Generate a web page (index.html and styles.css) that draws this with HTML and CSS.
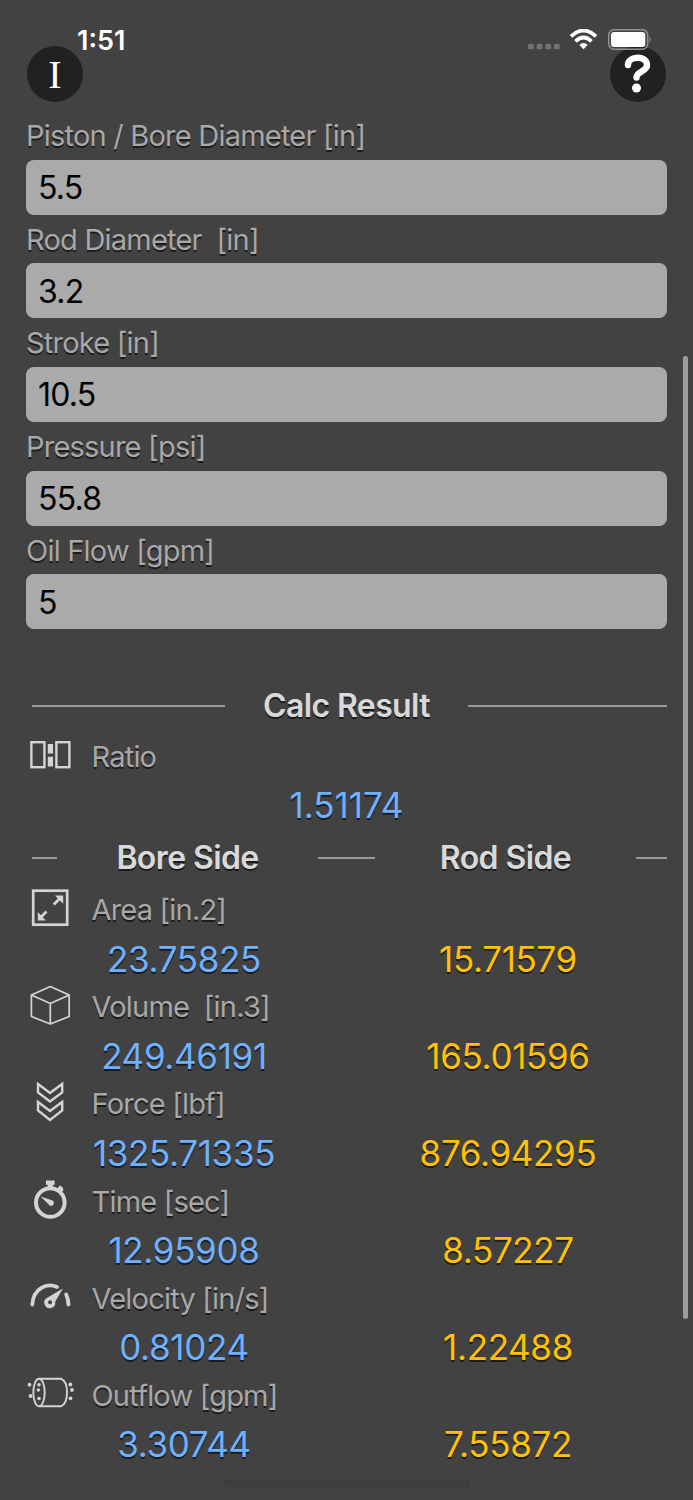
FILE: index.html
```html
<!DOCTYPE html>
<html>
<head>
<meta charset="utf-8">
<title>Cylinder Calculator</title>
<link rel="stylesheet" href="styles.css">
</head>
<body>

<div id="header">
	<div class="statusBar">
		<span class="time">1:51</span>
		<svg class="statusIcons" width="124" height="22" viewBox="0 0 124 22">
			<g fill="#727272">
				<rect x="0" y="14.800" width="5.800" height="5.500" rx="1.600"/>
				<rect x="8.700" y="14.800" width="5.800" height="5.500" rx="1.600"/>
				<rect x="17.400" y="14.800" width="5.800" height="5.500" rx="1.600"/>
				<rect x="26" y="14.800" width="5.800" height="5.500" rx="1.600"/>
			</g>
			<g fill="none" stroke="#fff" stroke-width="3.8">
				<path d="M43 7.3Q55.500 -4.300 68 7.300"/>
				<path d="M47.500 12.300Q55.500 4.900 63.500 12.300"/>
			</g>
			<path d="M51.300 16Q55.500 12.200 59.700 16L55.500 20.300Z" fill="#fff"/>
			<rect x="80.700" y=".7" width="39" height="19.600" rx="5.500" fill="none" stroke="#919191" stroke-width="1.500"/>
			<rect x="83" y="3" width="34.300" height="15" rx="3.200" fill="#fff"/>
			<path d="M121.500 7.500Q124 10.500 121.500 13.500Z" fill="#919191"/>
		</svg>
	</div>
	<div class="buttons">
		<button class="round unit">I</button>
		<button class="round help"><svg width="56" height="56" viewBox="0 0 56 56"><path d="M18 19C18 9.500 37 9 37 19C37 25.500 26.500 25.500 26.500 31.500" fill="none" stroke="#fff" stroke-width="6.400" stroke-linecap="round"/><circle cx="26.500" cy="42" r="4.500" fill="#fff"/></svg></button>
	</div>
</div>

<form id="inputs">
	<label for="bore">Piston / Bore Diameter [in]</label>
	<input id="bore" value="5.5">
	<label for="rod">Rod Diameter&nbsp; [in]</label>
	<input id="rod" value="3.2">
	<label for="stroke">Stroke [in]</label>
	<input id="stroke" value="10.5">
	<label for="pressure">Pressure [psi]</label>
	<input id="pressure" value="55.8">
	<label for="flow">Oil Flow [gpm]</label>
	<input id="flow" value="5">
</form>

<div id="results">
	<div class="divider total">
		<hr><h2>Calc Result</h2><hr>
	</div>

	<div class="name">
		<svg width="48" height="48" viewBox="0 0 48 48"><g fill="none" stroke="#d4d4d4" stroke-width="2.400"><rect x="5.400" y="10.200" width="13" height="25"/><rect x="30.400" y="10.200" width="13" height="25"/></g><path d="M21.800 12h5.200v9.400h-5.200zM21.800 24.800h5.200v9.800h-5.200z" fill="#d4d4d4"/></svg>
		<span>Ratio</span>
	</div>
	<div class="ratio">1.51174</div>

	<div class="divider sides">
		<hr><h2>Bore Side</h2><hr><h2>Rod Side</h2><hr>
	</div>

	<div class="name">
		<svg width="48" height="48" viewBox="0 0 48 48"><rect x="7.200" y="5.700" width="34" height="34" fill="none" stroke="#d4d4d4" stroke-width="2.700"/><g fill="none" stroke="#d4d4d4" stroke-width="2.800"><path d="M27.800 19.500L35 12.300M20.500 26.500L13.500 33.500"/></g><path d="M29 10.600h8.200v8.200l-2.600-2.600-3-3zM11.800 27v8.600H20l-3-2.800-2.400-2.800z" fill="#d4d4d4"/></svg>
		<span>Area [in.2]</span>
	</div>
	<div class="values"><b>23.75825</b><i>15.71579</i></div>

	<div class="name">
		<svg width="48" height="48" viewBox="0 0 48 48"><path d="M24.300 4.500L43.200 13v21.500L24.300 42 5.400 34.500V13zM5.400 13L24.300 21.500 43.200 13M24.300 21.500V42" fill="none" stroke="#d4d4d4" stroke-width="1.700" stroke-linejoin="round"/></svg>
		<span>Volume&nbsp; [in.3]</span>
	</div>
	<div class="values"><b>249.46191</b><i>165.01596</i></div>

	<div class="name">
		<svg width="48" height="48" viewBox="0 0 48 48"><path d="M12 5L24 14 36.200 5V13.500L24 22.500 12 13.500zM12 23L24 32 36.200 23V31.500L24 41 12 31.500z" fill="none" stroke="#d4d4d4" stroke-width="2.400"/></svg>
		<span>Force [lbf]</span>
	</div>
	<div class="values"><b>1325.71335</b><i>876.94295</i></div>

	<div class="name">
		<svg width="48" height="48" viewBox="0 0 48 48"><circle cx="24.300" cy="25.500" r="14.300" fill="none" stroke="#d4d4d4" stroke-width="4"/><path d="M20 3.500h8.700v4.300h-1.700v4h-5.300v-4H20zM31.500 11.500L34 8.200l3.200 2.700v2.800l-2 1.700zM14.500 19.500L26 23.200A2.900 2.900 0 1 1 22.300 27z" fill="#d4d4d4"/></svg>
		<span>Time [sec]</span>
	</div>
	<div class="values"><b>12.95908</b><i>8.57227</i></div>

	<div class="name">
		<svg width="48" height="48" viewBox="0 0 48 48"><g fill="none" stroke="#d4d4d4" stroke-width="3.800" stroke-linecap="round"><path d="M6.300 30.500C7.500 14 21 8.500 31 12.900M40.200 20.500Q42.100 24.500 42.500 30.500"/></g><path d="M36.800 14.500L29.200 27.700A5.500 5.500 0 1 1 21.300 23.700zM24 26.200a2 2 0 1 0 .1 0z" fill="#d4d4d4" fill-rule="evenodd"/></svg>
		<span>Velocity [in/s]</span>
	</div>
	<div class="values"><b>0.81024</b><i>1.22488</i></div>

	<div class="name">
		<svg width="48" height="48" viewBox="0 0 48 48"><g fill="none" stroke="#d4d4d4" stroke-width="1.900"><ellipse cx="13" cy="21.500" rx="5.700" ry="13.800"/><path d="M13 7.700H35C43 11 43 32 35 35.300H13"/></g><g fill="#d4d4d4"><circle cx="3.500" cy="13.700" r="1.900"/><circle cx="4.500" cy="25" r="1.900"/><circle cx="13" cy="13.800" r="1.800"/><circle cx="12.400" cy="19" r="1.800"/><circle cx="13" cy="27.500" r="1.800"/><circle cx="44.300" cy="13.500" r="1.900"/><circle cx="46" cy="19" r="1.900"/><circle cx="44.500" cy="27.300" r="1.900"/></g></svg>
		<span>Outflow [gpm]</span>
	</div>
	<div class="values"><b>3.30744</b><i>7.55872</i></div>
</div>

<div id="scrollbar"></div>
<div id="homeBar"></div>

</body>
</html>
```

FILE: styles.css
```css
*{
	box-sizing: border-box;
}
body{
	position: relative;
	margin: 0;
	height: 1500px;
	overflow: hidden;
	background: #424242;
	color: #a8a8a8;
	font: 29px/48px Inter, "Liberation Sans", sans-serif;
}

/* header */
#header{
	height: 111.2px;
	padding-top: 29px;
}
.statusBar{
	display: flex;
	justify-content: space-between;
	height: 17.4px;
	padding: 0 41px 0 77px;
}
.time{
	color: #fff;
	font-size: 27px;
	font-weight: 600;
	line-height: 23px;
}
.statusIcons{
	position: relative;
	z-index: 1;
	flex: none;
}
.buttons{
	display: flex;
	justify-content: space-between;
	padding: 0 27px;
}
.round{
	width: 56px;
	height: 56px;
	padding: 0;
	border: 0;
	border-radius: 50%;
	background: #212121;
	color: #fff;
}
.unit{
	font: 40px/53px "Liberation Serif", serif;
}
.help svg{
	display: block;
}

/* inputs */
#inputs{
	margin: 0 26px;
}
#inputs label{
	display: block;
	height: 48.6px;
	line-height: 50px;
	letter-spacing: -0.78px;
	text-shadow: 0 2px 0 #1c1c1c;
	white-space: nowrap;
}
#inputs input{
	display: block;
	width: 100%;
	height: 55px;
	padding: 1px 12px 0;
	border: 0;
	border-radius: 8px;
	background: #aaa;
	color: #000;
	font: 32px Inter, "Liberation Sans", sans-serif;
	letter-spacing: -0.8px;
}

/* results */
#results{
	margin: 50.6px 26px 0;
	text-shadow: 0 2px 0 #1c1c1c;
}
.divider{
	display: grid;
	align-items: center;
	height: 52px;
	padding-left: 6px;
}
.total{
	grid-template-columns: 193px 1fr 199px;
}
.sides{
	grid-template-columns: 25px 261px 57px 261px 31px;
	height: 56px;
	padding-top: 3px;
}
hr{
	width: 100%;
	height: 2px;
	margin: 0;
	border: 0;
	background: #999;
}
h2{
	margin: 0;
	color: #d9d9d9;
	font-size: 32px;
	font-weight: 600;
	letter-spacing: -0.6px;
	text-align: center;
}
.name{
	display: flex;
	height: 48.6px;
	line-height: 50px;
	letter-spacing: -0.8px;
}
.name svg{
	flex: none;
	margin-right: 17.5px;
}
.ratio, .values{
	height: 48.6px;
	color: #6fb1ff;
	font-size: 35px;
	line-height: 50px;
	text-align: center;
}
.values{
	display: grid;
	grid-template-columns: 316px 332px;
	letter-spacing: -0.35px;
}
.values b, .values i{
	font-weight: normal;
	font-style: normal;
}
.values i{
	color: #ffc107;
}

/* overlays */
#scrollbar{
	position: absolute;
	top: 356px;
	right: 5px;
	width: 5px;
	height: 963px;
	border-radius: 3px;
	background: #9d9d9d;
}
#homeBar{
	position: absolute;
	bottom: 13px;
	left: 223px;
	width: 247px;
	height: 8px;
	border-radius: 4px;
	background: #3d3d3d;
}
```
